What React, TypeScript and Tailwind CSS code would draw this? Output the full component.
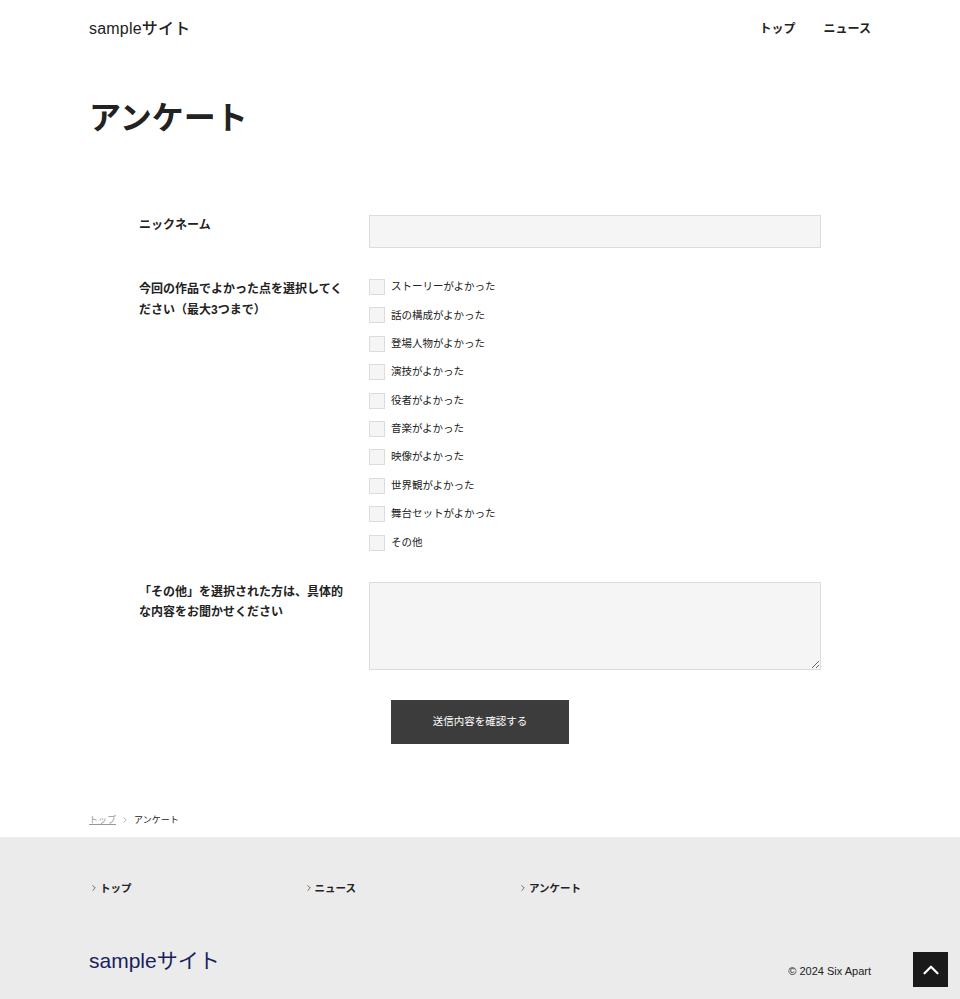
import React from 'react'
import { ChevronRight, ChevronUp } from 'lucide-react'

const options = [
  'ストーリーがよかった',
  '話の構成がよかった',
  '登場人物がよかった',
  '演技がよかった',
  '役者がよかった',
  '音楽がよかった',
  '映像がよかった',
  '世界観がよかった',
  '舞台セットがよかった',
  'その他',
]

const footerLinks = ['トップ', 'ニュース', 'アンケート']

// Form row: label column + field column
const FormRow: React.FC<{ label: React.ReactNode; children: React.ReactNode; className?: string }> = ({
  label,
  children,
  className = '',
}) => (
  <div className={`flex ${className}`}>
    <div className="w-[230px] shrink-0 pr-[22px] text-[12px] font-bold leading-[20.5px] text-[#222]">
      {label}
    </div>
    <div className="flex-1">{children}</div>
  </div>
)

export default function App() {
  return (
    <div className="min-h-[999px] bg-white font-['Liberation_Sans','Noto_Sans_CJK_JP',sans-serif] text-[#222]">
      <div className="mx-auto w-[782px]">
        {/* Header */}
        <header className="flex h-[58px] items-center justify-between">
          <div className="text-[16px] font-medium tracking-[0.2px]">sampleサイト</div>
          <nav className="flex gap-[28px] text-[12px] font-bold">
            <a>トップ</a>
            <a>ニュース</a>
          </nav>
        </header>

        <h1 className="mt-[33px] text-[32px] font-bold leading-[54px]">アンケート</h1>

        {/* Form */}
        <form className="mx-[50px] mt-[70px]">
          <FormRow label="ニックネーム">
            <input
              type="text"
              className="block h-[33px] w-full border border-[#dcdcdc] bg-[#f5f5f5] outline-none"
            />
          </FormRow>

          <FormRow className="mt-[31px]" label="今回の作品でよかった点を選択してください（最大3つまで）">
            <div className="flex flex-col gap-[12.4px]">
              {options.map(opt => (
                <label key={opt} className="flex h-[16px] items-center gap-[6px] text-[10.5px]">
                  <input
                    type="checkbox"
                    className="h-[16px] w-[16px] shrink-0 appearance-none border border-[#dcdcdc] bg-[#f5f5f5]"
                  />
                  <span>{opt}</span>
                </label>
              ))}
            </div>
          </FormRow>

          <FormRow className="mt-[31px]" label="「その他」を選択された方は、具体的な内容をお聞かせください">
            <textarea className="block h-[88px] w-full border border-[#dcdcdc] bg-[#f5f5f5] outline-none" />
          </FormRow>

          <div className="mt-[30px] flex justify-center">
            <button
              type="button"
              className="h-[44px] w-[178px] bg-[#3c3c3c] text-[10.5px] text-white"
            >
              送信内容を確認する
            </button>
          </div>
        </form>

        {/* Breadcrumb */}
        <div className="mt-[68px] flex items-center gap-[4px] pb-[9px] text-[9px] leading-[16px]">
          <a className="text-[#999] underline">トップ</a>
          <ChevronRight className="h-[10px] w-[10px] text-[#888]" strokeWidth={1.5} />
          <span>アンケート</span>
        </div>
      </div>

      {/* Footer */}
      <footer className="bg-[#ebebeb]">
        <div className="mx-auto w-[782px] pb-[24px] pt-[43px]">
          <ul className="flex text-[10.5px] font-bold leading-[16px]">
            {footerLinks.map(link => (
              <li key={link} className="flex w-[214.5px] items-center gap-[1px]">
                <ChevronRight className="h-[10px] w-[10px]" strokeWidth={1.5} />
                <span>{link}</span>
              </li>
            ))}
          </ul>
          <div className="mt-[50px] flex items-end justify-between">
            <div className="text-[21px] leading-[30px] text-[#1a1f5e]">sampleサイト</div>
            <div className="mb-[-3px] text-[11px] leading-[16px]">© 2024 Six Apart</div>
          </div>
        </div>
      </footer>

      {/* Back to top */}
      <button
        type="button"
        className="fixed bottom-[12px] right-[12px] flex h-[35px] w-[35px] items-center justify-center bg-[#1a1a1a] text-white"
      >
        <ChevronUp className="h-[26px] w-[26px]" strokeWidth={2} />
      </button>
    </div>
  )
}
